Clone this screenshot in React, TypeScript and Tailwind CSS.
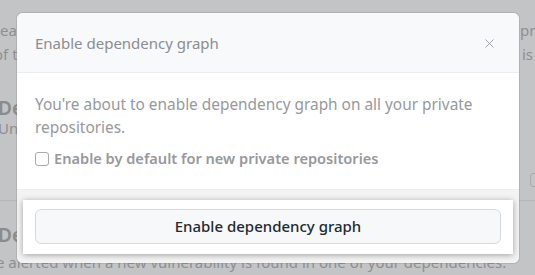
import { X } from 'lucide-react';

const FONT = "font-['Noto_Sans','Open_Sans',sans-serif]";

const BackgroundPage = () => (
	<div className="h-[275px] w-[535px] overflow-hidden bg-[#c3c4c6] text-[15px] text-[#8e8f91]">
		<div className="whitespace-nowrap pt-[18px] leading-[24px]">
			<div className="flex">
				<span className="w-[520px] shrink-0 overflow-hidden pl-[0px]">easily see which dependencies of your repository are used</span>
				<span>private</span>
			</div>
			<div className="flex">
				<span className="ml-[-6px] w-[528px] shrink-0 overflow-hidden">of the manifest and lock files in your repositories</span>
				<span>is</span>
			</div>
		</div>
		<div className="ml-[-2px] mt-[31px] whitespace-nowrap text-[19px] font-semibold leading-[22px] text-[#8a8b8d]">
			Dependabot alerts
		</div>
		<div className="ml-[-2px] mt-[-1px] whitespace-nowrap text-[15px] leading-[20px]">Understand your dependencies</div>
		<div className="mt-[35px] flex h-[14px] justify-end">
			<span className="mr-[-9px] h-[14px] w-[14px] rounded-[3px] border border-[#a9aaac]" />
		</div>
		<div className="mt-[13px] border-t border-[#b5b6b8]" />
		<div className="ml-[-2px] mt-[23px] whitespace-nowrap text-[19px] font-semibold leading-[22px] text-[#8a8b8d]">
			Dependabot alerts
		</div>
		<div className="ml-[-4px] mt-[6px] whitespace-nowrap text-[15px] leading-[20px]">
			e alerted when a new vulnerability is found in one of your dependencies.
		</div>
	</div>
);

const Modal = () => (
	<div className="absolute left-[17px] top-[13px] flex h-[250px] w-[502px] flex-col overflow-hidden rounded-[6px] bg-white shadow-[0_0_0_1px_rgba(120,120,120,0.25)]">
		<div className="flex h-[60px] items-center justify-between border-b border-[#ebedf0] bg-[#f8f9fb] pl-[18px] pr-[22px] pt-[2px]">
			<span className="text-[15px] text-[#8b8d90]">Enable dependency graph</span>
			<X className="h-[15px] w-[15px] text-[#96989b]" strokeWidth={1.4} />
		</div>
		<div className="flex h-[117px] flex-col border-b border-[#eceef0] px-[18px] pt-[20px]">
			<p className="text-[15.4px] leading-[23px] text-[#97999c]">
				You're about to enable dependency graph on all your private repositories.
			</p>
			<label className="mt-[9px] flex items-center gap-[5px] text-[14.6px] font-semibold text-[#97999c]">
				<span className="h-[14px] w-[14px] rounded-[3px] border border-[#a7a9ac] bg-white" />
				Enable by default for new private repositories
			</label>
		</div>
		<div className="flex-1 bg-[#f3f3f4] px-[6px] pt-[10px]">
			<div className="bg-white px-[12px] pb-[10px] pt-[9px] shadow-[0_1px_6px_rgba(0,0,0,0.35)]">
				<button className="flex h-[35px] w-full items-center justify-center rounded-[6px] border border-[#d7dadd] bg-[#f6f8fa] text-[15px] font-medium text-[#24292e]">
					Enable dependency graph
				</button>
			</div>
		</div>
	</div>
);

export default function App() {
	return (
		<div className={`relative h-[275px] w-[535px] overflow-hidden ${FONT}`}>
			<BackgroundPage />
			<Modal />
		</div>
	);
}
